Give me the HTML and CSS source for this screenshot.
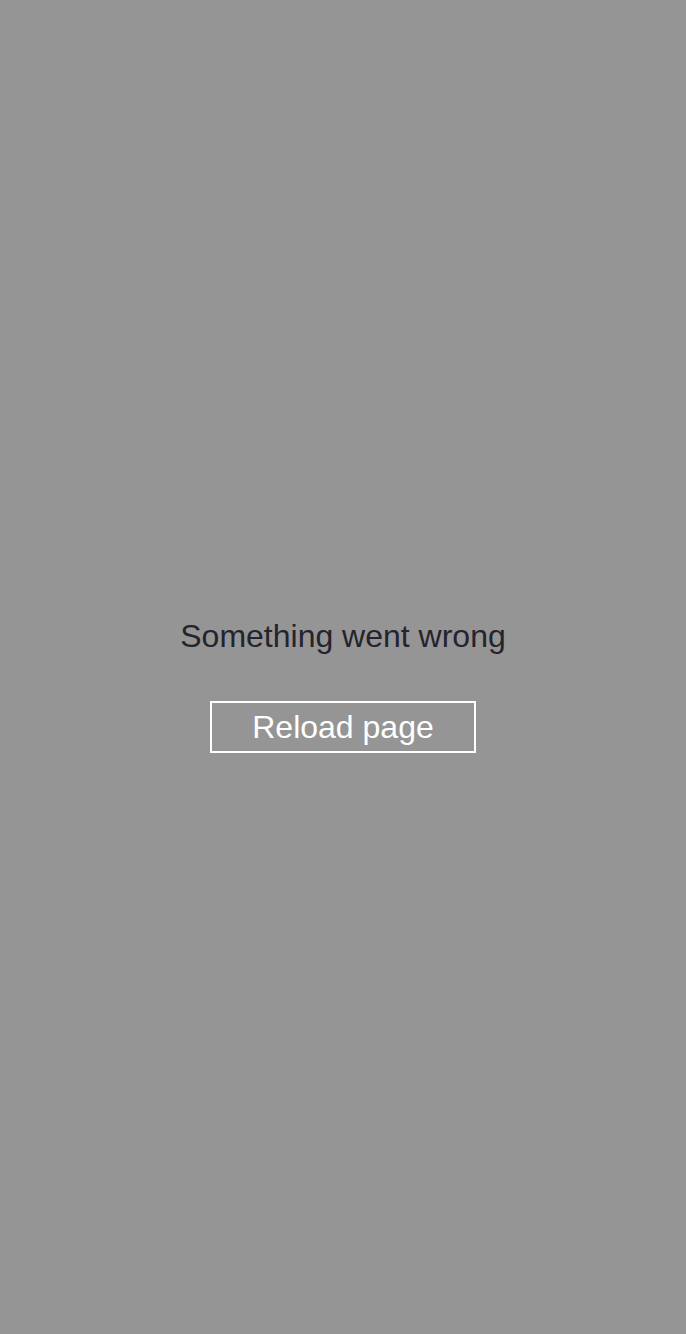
FILE: index.html
```html
<!DOCTYPE html>
<html>
<head>
<meta charset="utf-8">
<link rel="stylesheet" href="styles.css">
</head>
<body>
<main class="error-screen">
  <h1 class="error-title">Something went wrong</h1>
  <button class="reload-btn" type="button">Reload page</button>
</main>
</body>
</html>
```

FILE: styles.css
```css
html, body {
  margin: 0;
  padding: 0;
  height: 100%;
  background: #959595;
}
.error-screen {
  box-sizing: border-box;
  min-height: 100vh;
  display: flex;
  flex-direction: column;
  align-items: center;
  justify-content: center;
  padding-top: 36px;
  font-family: "Liberation Sans", Arial, sans-serif;
}
.error-title {
  margin: 0 0 46px;
  font-size: 32px;
  font-weight: normal;
  line-height: 37px;
  color: #25242c;
}
.reload-btn {
  font-family: "Liberation Sans", Arial, sans-serif;
  font-size: 32px;
  line-height: 37px;
  color: #ffffff;
  background: transparent;
  border: 2px solid #ffffff;
  border-radius: 0;
  padding: 6px 40px 5px;
  margin: 0;
  cursor: pointer;
}
```
